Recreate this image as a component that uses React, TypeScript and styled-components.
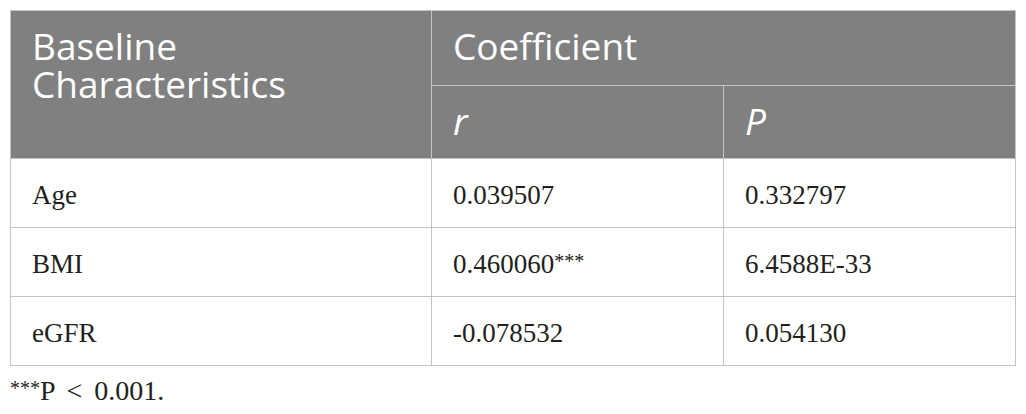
import React from "react";
import styled, { createGlobalStyle } from "styled-components";

const Global = createGlobalStyle`
  html, body { margin: 0; padding: 0; background: #ffffff; }
  body { width: 1026px; height: 414px; overflow: hidden; }
`;

const Wrap = styled.div`
  padding: 10px 0 0 10px;
  width: 1005px;
`;

const Table = styled.table`
  width: 1005px;
  border-collapse: collapse;
  table-layout: fixed;
  border: 1px solid #c4c4c4;
`;

const HeadRow = styled.tr<{ $h: number }>`
  height: ${(p) => p.$h}px;
`;

const HeadCell = styled.th<{ $italic?: boolean }>`
  background: #808080;
  color: #ffffff;
  font-family: "Open Sans", Lato, sans-serif;
  font-weight: 400;
  font-size: 37px;
  line-height: 38px;
  text-align: left;
  vertical-align: top;
  padding: 16px 21px 0 21px;
  border: 1px solid #c4c4c4;
  font-style: ${(p) => (p.$italic ? "italic" : "normal")};
`;

const HeadLine = styled.span`
  display: block;
  height: 38px;
`;

const Cell = styled.td`
  font-family: "Liberation Serif", "Times New Roman", serif;
  font-size: 27px;
  color: #231f20;
  padding: 4px 21px 0;
  height: 64px;
  border: 1px solid #c4c4c4;
  vertical-align: middle;
`;

const Stars = styled.span`
  font-size: 20px;
  vertical-align: 5px;
`;

const Foot = styled.div`
  font-family: "Liberation Serif", "Times New Roman", serif;
  font-size: 28px;
  color: #231f20;
  margin-top: 9px;
  word-spacing: 5px;
`;

const rows: [string, React.ReactNode, string][] = [
  ["Age", "0.039507", "0.332797"],
  ["BMI", <>0.460060<Stars>***</Stars></>, "6.4588E-33"],
  ["eGFR", "-0.078532", "0.054130"],
];

export default function App() {
  return (
    <Wrap>
      <Global />
      <Table>
        <colgroup>
          <col style={{ width: 421 }} />
          <col style={{ width: 292 }} />
          <col style={{ width: 292 }} />
        </colgroup>
        <thead>
          <HeadRow $h={75}>
            <HeadCell rowSpan={2}>
              <HeadLine>Baseline</HeadLine>
              <HeadLine>Characteristics</HeadLine>
            </HeadCell>
            <HeadCell colSpan={2}>Coefficient</HeadCell>
          </HeadRow>
          <HeadRow $h={73}>
            <HeadCell $italic>r</HeadCell>
            <HeadCell $italic>P</HeadCell>
          </HeadRow>
        </thead>
        <tbody>
          {rows.map((r, i) => (
            <tr key={i}>
              <Cell>{r[0]}</Cell>
              <Cell>{r[1]}</Cell>
              <Cell>{r[2]}</Cell>
            </tr>
          ))}
        </tbody>
      </Table>
      <Foot><Stars>***</Stars>P &lt; 0.001.</Foot>
    </Wrap>
  );
}
